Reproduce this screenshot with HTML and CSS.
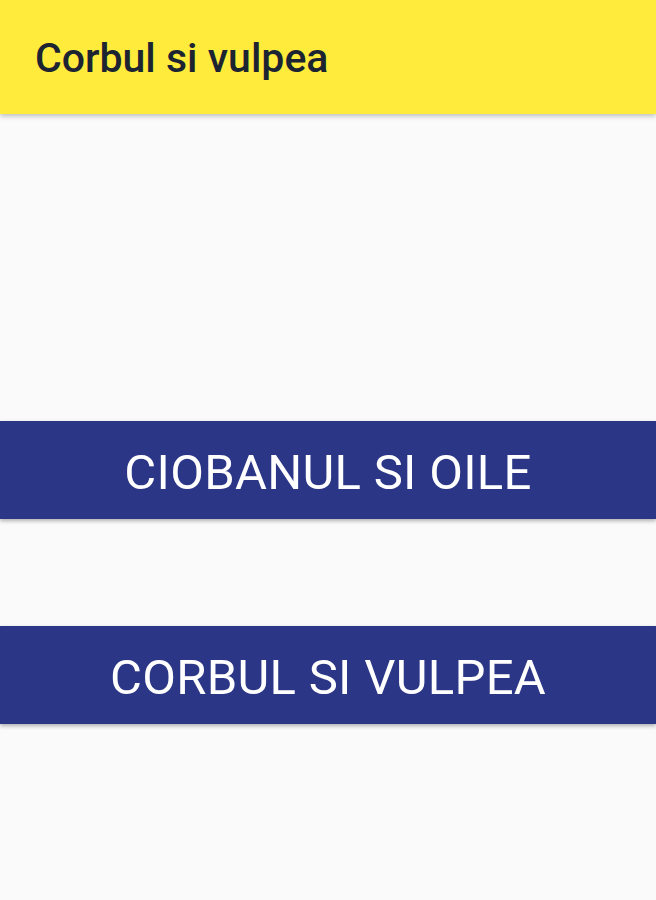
FILE: index.html
```html
<!DOCTYPE html>
<html>
<head>
<meta charset="utf-8">
<link rel="stylesheet" href="styles.css">
</head>
<body>
<header class="appbar"><h1 class="title">Corbul si vulpea</h1></header>
<main class="content">
  <button class="story">CIOBANUL SI OILE</button>
  <button class="story">CORBUL SI VULPEA</button>
</main>
</body>
</html>
```
FILE: styles.css
```css
html, body { margin: 0; padding: 0; }
body {
  background: #fafafa;
  font-family: Roboto, "Noto Sans", sans-serif;
  width: 656px;
  height: 900px;
  overflow: hidden;
}
.appbar {
  height: 114px;
  background: #ffeb3b;
  display: flex;
  align-items: center;
  padding: 0 35px;
  box-shadow: 0 2px 5px rgba(0,0,0,0.25);
  position: relative;
  z-index: 1;
  box-sizing: border-box;
}
.title {
  margin: 0;
  font-size: 41px;
  font-weight: 500;
  color: #1c2432;
  padding-top: 2px;
}
.content {
  display: flex;
  flex-direction: column;
  padding-top: 307px;
  gap: 107px;
}
.story {
  height: 98px;
  width: 100%;
  border: 0;
  margin: 0;
  background: #2b3686;
  color: #fff;
  font-family: Roboto, "Noto Sans", sans-serif;
  font-size: 49px;
  font-weight: 400;
  letter-spacing: 0.3px;
  box-shadow: 0 2px 4px rgba(0,0,0,0.3);
  padding: 4px 0 0;
}
```
